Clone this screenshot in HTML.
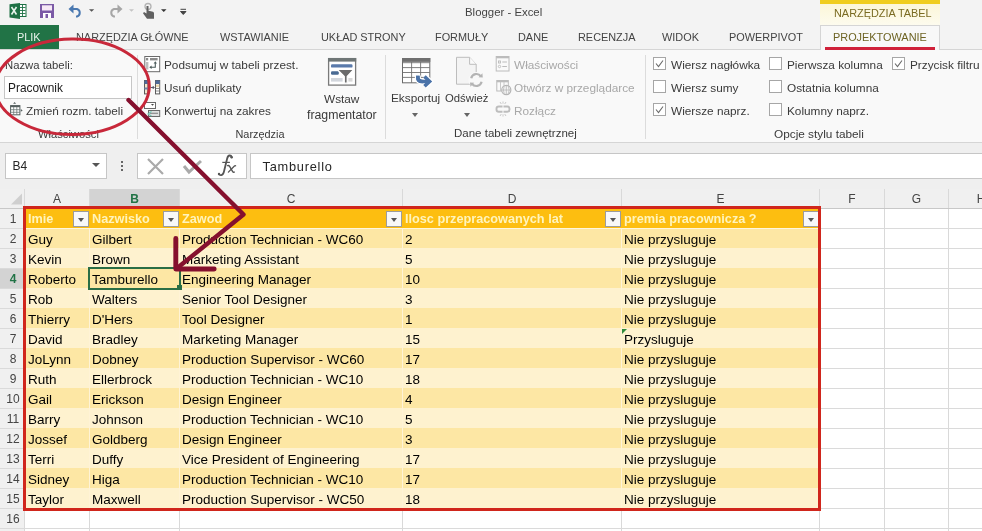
<!DOCTYPE html>
<html><head><meta charset="utf-8">
<style>
*{margin:0;padding:0;box-sizing:border-box}
html,body{width:982px;height:531px;overflow:hidden;background:#fff;will-change:transform;font-family:"Liberation Sans",sans-serif;color:#262626}
.a{position:absolute;white-space:nowrap}
#title{left:0;top:0;width:982px;height:25px;background:#f3f3f3}
#tabs{left:0;top:25px;width:982px;height:24px;background:#f3f3f3}
.tab{font-size:10.9px;color:#444;top:31px}
#ribbon{left:0;top:49px;width:982px;height:94px;background:#f9f9f9;border-top:1px solid #d5d5d5;border-bottom:1px solid #d5d5d5}
.rt{font-size:11.8px;color:#3a3a3a}
.gl{font-size:11.8px;color:#3a3a3a}
.sep{width:1px;background:#dcdcdc;top:55px;height:84px}
.dis{color:#a8a8a8}
.cb{width:13px;height:13px;border:1px solid #a6a6a6;background:#fff}
#gap1{left:0;top:143px;width:982px;height:10px;background:#efefef}
#fbar{left:0;top:153px;width:982px;height:26px;background:#efefef}
#gap2{left:0;top:179px;width:982px;height:10px;background:#efefef}
#grid{left:0;top:189px;width:982px;height:342px;background:#fff}
.ch{font-size:12px;color:#444;top:189px;height:19px;line-height:20px;text-align:center}
.rh{font-size:12px;color:#444;left:1px;width:24px;height:20px;line-height:22px;text-align:right;padding-right:3px}
.cell{font-size:13.5px;color:#000;height:20px;line-height:20px}
.hd{font-weight:bold;font-size:12.7px;color:#fff4bc}
.dd{width:16px;height:16px;background:#f8f8f8;border:1px solid #9c9c9c}
.dd:after{content:"";position:absolute;left:3.5px;top:5.5px;border-left:3.5px solid transparent;border-right:3.5px solid transparent;border-top:4px solid #555}
</style></head><body>
<div class="a" id="title"></div>
<div class="a" id="tabs"></div>
<div class="a" id="ribbon"></div>
<div class="a" id="gap1"></div>
<div class="a" id="fbar"></div>
<div class="a" id="gap2"></div>
<div class="a" id="grid"></div>

<!-- title -->
<div class="a" style="left:465px;top:6px;font-size:11.4px;color:#444">Blogger - Excel</div>
<!-- contextual tab header -->
<div class="a" style="left:820px;top:0;width:120px;height:25px;background:linear-gradient(#fcf6d4,#fdfbee)"></div>
<div class="a" style="left:820px;top:0;width:120px;height:3.5px;background:#f0cd1e"></div>
<div class="a" style="left:834px;top:7px;font-size:10.9px;color:#7a6b22">NARZĘDZIA TABEL</div>

<!-- tabs -->
<div class="a" style="left:0;top:25px;width:59px;height:24px;background:#217346"></div>
<div class="a tab" style="left:17px;color:#e6f2ea">PLIK</div>
<div class="a tab" style="left:76px">NARZĘDZIA GŁÓWNE</div>
<div class="a tab" style="left:220px">WSTAWIANIE</div>
<div class="a tab" style="left:321px">UKŁAD STRONY</div>
<div class="a tab" style="left:435px">FORMUŁY</div>
<div class="a tab" style="left:518px">DANE</div>
<div class="a tab" style="left:578px">RECENZJA</div>
<div class="a tab" style="left:662px">WIDOK</div>
<div class="a tab" style="left:729px">POWERPIVOT</div>
<div class="a" style="left:820px;top:25px;width:120px;height:25px;background:#f8f8f8;border:1px solid #d5d5d5;border-bottom:none"></div>
<div class="a tab" style="left:833px;color:#6e6424">PROJEKTOWANIE</div>
<div class="a" style="left:825px;top:47px;width:110px;height:2.5px;background:#d0213a"></div>


<!-- quick access -->
<svg class="a" style="left:0;top:0" width="200" height="25" viewBox="0 0 200 25">
 <rect x="19" y="4.5" width="7" height="12" fill="#fff" stroke="#1e7145" stroke-width="1"/>
 <path d="M19.5 7.5h6M19.5 10.5h6M19.5 13.5h6M22.5 5v11" stroke="#1e7145" stroke-width="0.9"/>
 <path d="M9.5 4.2 L20 3 V19 L9.5 17.6z" fill="#1e7145"/>
 <path d="M11.5 7 l5 7.5 M16.5 7 l-5 7.5" stroke="#e8f4ec" stroke-width="1.6"/>
 <rect x="40" y="4" width="14" height="14" fill="#7b5aa6"/>
 <rect x="42" y="5.3" width="10" height="5.2" fill="#f6e8f6"/>
 <rect x="43" y="13" width="8" height="5" fill="#fff"/>
 <rect x="45.5" y="14" width="2.5" height="4" fill="#7b5aa6"/>
 <path d="M72.5 9 H77 a4 4 0 0 1 0 7.6 H76" fill="none" stroke="#4a78b0" stroke-width="2"/>
 <path d="M68.5 9 l5 -4.5 v9z" fill="#4a78b0"/>
 <path d="M89 9.2h5.2l-2.6 2.6z" fill="#555"/>
 <path d="M118.5 9 H114 a4 4 0 0 0 0 7.6 H115" fill="none" stroke="#a6a6a6" stroke-width="2"/>
 <path d="M122.5 9 l-5 -4.5 v9z" fill="#a6a6a6"/>
 <path d="M129 9.2h5l-2.5 2.6z" fill="#c4c4c4"/>
 <circle cx="148" cy="6.5" r="3" fill="none" stroke="#b4b4b4" stroke-width="1.3"/>
 <path d="M146.5 6 v7.5 l-2.5 -1.5 l-1 1.2 l4 5.5 h7 v-5.5 q0 -1.5 -2 -1.8 l-3.5 -0.6 v-4.8z" fill="#606060"/>
 <path d="M161 9.2h5.5l-2.75 2.8z" fill="#333"/>
 <path d="M180.5 9.3h5.5M180.5 11.5h5.5l-2.75 3z" stroke="#444" fill="#444" stroke-width="1"/>
</svg>

<!-- group 1 -->
<div class="a rt" style="left:5px;top:59px;font-size:11.3px">Nazwa tabeli:</div>
<div class="a" style="left:4px;top:76px;width:128px;height:23px;background:#fff;border:1px solid #c6c6c6"></div>
<div class="a" style="left:8px;top:81px;font-size:11.9px;color:#1a1a1a">Pracownik</div>
<svg class="a" style="left:5px;top:100px" width="20" height="20" viewBox="0 0 20 20">
 <rect x="5.6" y="5.6" width="9.3" height="9.2" fill="#fff" stroke="#56605f" stroke-width="1"/>
 <rect x="5.6" y="5.6" width="9.3" height="1.6" fill="#56605f"/>
 <path d="M5.6 9.7h9.3M5.6 12.3h9.3M8.7 7v7.8M11.8 7v7.8" stroke="#6c7877" stroke-width="0.8"/>
 <path d="M8.1 3.8 L9.6 2 L11.1 3.8z" fill="#56605f"/>
 <path d="M15.8 9 L17.7 10.4 L15.8 11.8z" fill="#56605f"/>
</svg>
<div class="a rt" style="left:26px;top:104px">Zmień rozm. tabeli</div>
<div class="a gl" style="left:38px;top:128px;font-size:11.2px">Właściwości</div>
<div class="a sep" style="left:137px"></div>

<!-- group 2 -->
<svg class="a" style="left:142px;top:54px" width="20" height="66" viewBox="0 0 20 66">
 <rect x="2.8" y="2.5" width="14.9" height="15.2" fill="#fff" stroke="#6a6a6a" stroke-width="1"/>
 <rect x="4" y="4" width="2.2" height="2.4" fill="#8a8a8a"/>
 <rect x="8" y="4" width="7.6" height="2.4" fill="#8a8a8a"/>
 <rect x="4" y="8" width="2.4" height="7.5" fill="#bdbdbd"/>
 <path d="M13.3 9 V13.2 H9" fill="none" stroke="#4a5a5a" stroke-width="1.1"/>
 <path d="M11.6 9.6 L13.3 7.3 L15 9.6z M9.6 11.5 L7.3 13.2 L9.6 14.9z" fill="#4a5a5a"/>
 <rect x="2.5" y="26.5" width="3.4" height="13.4" fill="#f1e4cc" stroke="#5b5b5b" stroke-width="1"/>
 <rect x="2.5" y="26.5" width="3.4" height="3.5" fill="#4e6a9a"/>
 <rect x="2.5" y="33.5" width="3.4" height="2" fill="#6e86ab"/>
 <rect x="13.5" y="26.5" width="4.2" height="13.4" fill="#fff" stroke="#5b5b5b" stroke-width="1"/>
 <rect x="13.5" y="26.5" width="4.2" height="3.5" fill="#4e6a9a"/>
 <rect x="14" y="30.5" width="3.2" height="2.6" fill="#e8d6b0"/>
 <path d="M14 34.5 h3.2 M14 37 h3.2" stroke="#5b5b5b" stroke-width="0.7"/>
 <path d="M8.5 33.5 h3.5 M10.7 32 l1.5 1.5 l-1.5 1.5" stroke="#556" stroke-width="1" fill="none"/>
 <rect x="2.5" y="48.5" width="11" height="6" fill="#fff" stroke="#6a6a6a" stroke-width="1"/>
 <path d="M9 50 h3 l-1.5 1.8z" fill="#444"/>
 <rect x="6.5" y="56.5" width="11.2" height="6" fill="#e0e0e0" stroke="#6a6a6a" stroke-width="1"/>
 <path d="M8 59.3 h8" stroke="#8c8c8c" stroke-width="1.2"/>
 <path d="M9.5 57.5 l-3.5 2.5 l3.5 2" stroke="#6fc3b0" stroke-width="1.1" fill="none"/>
</svg>
<div class="a rt" style="left:164px;top:58px">Podsumuj w tabeli przest.</div>
<div class="a rt" style="left:164px;top:81px">Usuń duplikaty</div>
<div class="a rt" style="left:164px;top:104px">Konwertuj na zakres</div>
<svg class="a" style="left:324px;top:54px" width="36" height="36" viewBox="0 0 36 36">
 <rect x="4.6" y="4.6" width="27" height="26.5" fill="#fff" stroke="#7a7a7a" stroke-width="1.3"/>
 <rect x="4" y="4" width="28.2" height="3.6" fill="#6f7676"/>
 <rect x="7" y="10.2" width="21.5" height="3.4" rx="1.2" fill="#5a7aab"/>
 <rect x="7" y="17.3" width="7.8" height="3.4" rx="1.2" fill="#4a6b94"/>
 <rect x="7" y="24" width="11.6" height="3.6" fill="#d2d6dc"/>
 <rect x="24.4" y="24" width="4.1" height="3.6" fill="#d8d8d8"/>
 <path d="M13.2 15.3 H29.8 L23.2 22.5 V29.2 H20.3 V22.5z" fill="#6b6b6b" stroke="#fff" stroke-width="1.2" stroke-linejoin="round"/>
</svg>
<div class="a rt" style="left:324px;top:92px">Wstaw</div>
<div class="a rt" style="left:307px;top:108px;font-size:12.3px">fragmentator</div>
<div class="a gl" style="left:235.5px;top:127.5px;font-size:10.9px">Narzędzia</div>
<div class="a sep" style="left:385px"></div>

<!-- group 3 -->
<svg class="a" style="left:398px;top:54px" width="40" height="40" viewBox="0 0 40 40">
 <rect x="4.5" y="4.5" width="27.3" height="24.3" fill="#fff" stroke="#6a6a6a" stroke-width="1"/>
 <rect x="4" y="4" width="28.3" height="3.9" fill="#707070"/>
 <path d="M4.5 8.7h27.3M4.5 13.6h27.3M4.5 18.5h27.3M4.5 23.4h27.3M13.6 8v20.8M22.6 8v20.8" stroke="#707070" stroke-width="0.9"/>
 <path d="M19.8 21.5 v1.5 q0 4.5 4.5 4.5 h3" fill="none" stroke="#fff" stroke-width="6"/>
 <path d="M19.8 21.8 v1.2 q0 4.5 4.5 4.5 h3" fill="none" stroke="#4a72a8" stroke-width="3.6"/>
 <path d="M26.5 22.5 L31.6 27.4 L26.5 32.3" fill="none" stroke="#fff" stroke-width="6"/><path d="M19.8 21.8 v1.2 q0 4.5 4.5 4.5 h5" fill="none" stroke="#4a72a8" stroke-width="3.6"/><path d="M26.5 22.5 L31.6 27.4 L26.5 32.3" fill="none" stroke="#4a72a8" stroke-width="3.6"/>
</svg>
<div class="a rt" style="left:391px;top:91px">Eksportuj</div>
<div class="a" style="left:412px;top:113px;width:0;height:0;border-left:3.5px solid transparent;border-right:3.5px solid transparent;border-top:4px solid #666"></div>
<svg class="a" style="left:450px;top:52px" width="40" height="40" viewBox="0 0 40 40">
 <path d="M6.5 5.3 H19.6 L26.2 12.3 V32.2 H6.5z" fill="#f4f4f4" stroke="#bdbdbd" stroke-width="1"/>
 <path d="M19.6 5.3 V12.3 H26.2" fill="#fafafa" stroke="#bdbdbd" stroke-width="1"/>
 <circle cx="26.4" cy="28" r="8" fill="#f8f8f8"/>
 <path d="M21.2 26.2 A5.4 5.4 0 0 1 30.8 24.2" fill="none" stroke="#b4b4b4" stroke-width="2.2"/>
 <path d="M31.6 29.8 A5.4 5.4 0 0 1 22 31.8" fill="none" stroke="#b4b4b4" stroke-width="2.2"/>
 <path d="M28.6 25.2 L32.8 25.6 L32.4 21.2z" fill="#b4b4b4"/>
 <path d="M24.2 30.8 L20 30.4 L20.4 34.8z" fill="#b4b4b4"/>
</svg>
<div class="a rt" style="left:445px;top:91.5px;font-size:11.3px">Odśwież</div>
<div class="a" style="left:464px;top:113px;width:0;height:0;border-left:3.5px solid transparent;border-right:3.5px solid transparent;border-top:4px solid #666"></div>
<svg class="a" style="left:492px;top:54px" width="22" height="66" viewBox="0 0 22 66">
 <rect x="4.2" y="2.5" width="12.8" height="14.5" fill="#fafafa" stroke="#bcbcbc" stroke-width="1"/>
 <rect x="4.2" y="2.5" width="12.8" height="1.8" fill="#bcbcbc"/>
 <rect x="6.5" y="7" width="2" height="2" fill="none" stroke="#bcbcbc" stroke-width="0.9"/>
 <circle cx="7.5" cy="12.5" r="1.2" fill="none" stroke="#bcbcbc" stroke-width="0.9"/>
 <path d="M10.3 8h4.6M10.3 12.5h4.6" stroke="#bcbcbc" stroke-width="1.1"/>
 <rect x="4.8" y="26.5" width="11.5" height="10.5" fill="#fafafa" stroke="#bcbcbc" stroke-width="1"/>
 <rect x="4.8" y="26.5" width="11.5" height="1.8" fill="#bcbcbc"/>
 <path d="M8.5 28v9M12 28v9" stroke="#c4c4c4" stroke-width="0.9"/>
 <circle cx="14.3" cy="36" r="4.6" fill="#f6f6f6" stroke="#b4b4b4" stroke-width="1.1"/>
 <path d="M10 36h8.6M14.3 31.5v9M12.2 32.2q-1.5 3.8 0 7.6M16.4 32.2q1.5 3.8 0 7.6" stroke="#b8b8b8" stroke-width="0.8" fill="none"/>
 <path d="M10.5 52.5 H6.8 q-2.3 0 -2.3 2.3 v0.6 q0 2.3 2.3 2.3 H10.5" fill="none" stroke="#bdbdbd" stroke-width="1.9"/>
 <path d="M11.5 52.5 H15.2 q2.3 0 2.3 2.3 v0.6 q0 2.3 -2.3 2.3 H11.5" fill="none" stroke="#bdbdbd" stroke-width="1.9"/>
 <path d="M8 48l1.3 2M11 47.5v2.2M14 48l-1.3 2M8 62l1.3 -2M11 62.5v-2.2M14 62l-1.3 -2" stroke="#c4c4c4" stroke-width="0.9"/>
</svg>
<div class="a rt dis" style="left:514px;top:58px">Właściwości</div>
<div class="a rt dis" style="left:514px;top:81px">Otwórz w przeglądarce</div>
<div class="a rt dis" style="left:514px;top:104px">Rozłącz</div>
<div class="a gl" style="left:454px;top:127px;font-size:11.5px">Dane tabeli zewnętrznej</div>
<div class="a sep" style="left:645px"></div>

<!-- group 4 -->
<div class="a cb" style="left:653px;top:57px"></div>
<div class="a cb" style="left:653px;top:80px"></div>
<div class="a cb" style="left:653px;top:103px"></div>
<div class="a cb" style="left:769px;top:57px"></div>
<div class="a cb" style="left:769px;top:80px"></div>
<div class="a cb" style="left:769px;top:103px"></div>
<div class="a cb" style="left:892px;top:57px"></div>
<svg class="a" style="left:653px;top:57px" width="13" height="13"><path d="M3 6.5 l2.5 3 l4.5 -6" stroke="#6a6a6a" stroke-width="1.1" fill="none"/></svg>
<svg class="a" style="left:653px;top:103px" width="13" height="13"><path d="M3 6.5 l2.5 3 l4.5 -6" stroke="#6a6a6a" stroke-width="1.1" fill="none"/></svg>
<svg class="a" style="left:892px;top:57px" width="13" height="13"><path d="M3 6.5 l2.5 3 l4.5 -6" stroke="#6a6a6a" stroke-width="1.1" fill="none"/></svg>
<div class="a rt" style="left:671px;top:58px">Wiersz nagłówka</div>
<div class="a rt" style="left:671px;top:80.7px">Wiersz sumy</div>
<div class="a rt" style="left:671px;top:104px">Wiersze naprz.</div>
<div class="a rt" style="left:787px;top:58px">Pierwsza kolumna</div>
<div class="a rt" style="left:787px;top:80.7px">Ostatnia kolumna</div>
<div class="a rt" style="left:787px;top:104px">Kolumny naprz.</div>
<div class="a rt" style="left:910px;top:58px">Przycisk filtru</div>
<div class="a gl" style="left:774px;top:127px">Opcje stylu tabeli</div>

<!-- formula bar -->
<div class="a" style="left:5px;top:153px;width:102px;height:26px;background:#fff;border:1px solid #c6c6c6"></div>
<div class="a" style="left:12.5px;top:159px;font-size:12px;color:#262626">B4</div>
<div class="a" style="left:92px;top:163px;width:0;height:0;border-left:4px solid transparent;border-right:4px solid transparent;border-top:4px solid #555"></div>
<div class="a" style="left:121px;top:161px;width:2px;height:2px;background:#666"></div>
<div class="a" style="left:121px;top:165px;width:2px;height:2px;background:#666"></div>
<div class="a" style="left:121px;top:169px;width:2px;height:2px;background:#666"></div>
<div class="a" style="left:137px;top:153px;width:110px;height:26px;background:#fff;border:1px solid #c6c6c6"></div>
<svg class="a" style="left:147px;top:158px" width="95" height="18" viewBox="0 0 95 18">
 <path d="M1 1l15 15M16 1l-15 15" stroke="#aaa" stroke-width="2.2"/>
 <path d="M37 8l5 6l12 -11" stroke="#aaa" stroke-width="3" fill="none"/>
 </svg>
<svg class="a" style="left:212px;top:152px" width="30" height="28" viewBox="0 0 30 28">
 <path d="M19.8 5.3 q-0.6 -2 -2.2 -1.8 q-1.8 0.2 -2.5 3.2 l-2.8 11.5 q-0.9 4.5 -3 4.9 q-1.6 0.3 -2.4 -1" fill="none" stroke="#555" stroke-width="1.8" stroke-linecap="round"/>
 <circle cx="19.6" cy="5.3" r="1.2" fill="#555"/>
 <circle cx="7" cy="22" r="1.2" fill="#555"/>
 <path d="M10.3 10.4 h7.6" stroke="#555" stroke-width="1.2"/>
 <path d="M15.6 13.6 q1.2 -0.6 2 0.8 l3.2 5.4 q0.6 0.8 1.4 0.3" fill="none" stroke="#555" stroke-width="1.4" stroke-linecap="round"/>
 <path d="M23.6 13.8 q-0.6 -0.4 -1.4 0.4 l-5.8 5.9" fill="none" stroke="#555" stroke-width="1.3" stroke-linecap="round"/>
</svg>
<div class="a" style="left:250px;top:153px;width:740px;height:26px;background:#fff;border:1px solid #c6c6c6"></div>
<div class="a" style="left:262.5px;top:159px;font-size:12.8px;letter-spacing:0.75px;color:#262626">Tamburello</div>

<!-- grid -->
<div class="a" style="left:0;top:189px;width:982px;height:19px;background:#f0f0f0"></div>
<div class="a" style="left:89px;top:189px;width:91px;height:19px;background:#d3d3d3"></div>
<div class="a" style="left:0;top:208px;width:24px;height:323px;background:#f0f0f0"></div>
<div class="a" style="left:0;top:268px;width:24px;height:20px;background:#d3d3d3"></div>
<svg class="a" style="left:0;top:189px" width="24" height="19"><path d="M11 15.5 L22 15.5 L22 4.5z" fill="#cfcfcf"/></svg>
<div class="a" style="left:24px;top:189px;width:1px;height:342px;background:#d9d9d9"></div>
<div class="a" style="left:89px;top:189px;width:1px;height:342px;background:#d9d9d9"></div>
<div class="a" style="left:179px;top:189px;width:1px;height:342px;background:#d9d9d9"></div>
<div class="a" style="left:402px;top:189px;width:1px;height:342px;background:#d9d9d9"></div>
<div class="a" style="left:621px;top:189px;width:1px;height:342px;background:#d9d9d9"></div>
<div class="a" style="left:819px;top:189px;width:1px;height:342px;background:#d9d9d9"></div>
<div class="a" style="left:884px;top:189px;width:1px;height:342px;background:#d9d9d9"></div>
<div class="a" style="left:948px;top:189px;width:1px;height:342px;background:#d9d9d9"></div>
<div class="a" style="left:0;top:208px;width:982px;height:1px;background:#c8c8c8"></div>
<div class="a" style="left:0;top:228px;width:982px;height:1px;background:#dadada"></div>
<div class="a" style="left:0;top:248px;width:982px;height:1px;background:#dadada"></div>
<div class="a" style="left:0;top:268px;width:982px;height:1px;background:#dadada"></div>
<div class="a" style="left:0;top:288px;width:982px;height:1px;background:#dadada"></div>
<div class="a" style="left:0;top:308px;width:982px;height:1px;background:#dadada"></div>
<div class="a" style="left:0;top:328px;width:982px;height:1px;background:#dadada"></div>
<div class="a" style="left:0;top:348px;width:982px;height:1px;background:#dadada"></div>
<div class="a" style="left:0;top:368px;width:982px;height:1px;background:#dadada"></div>
<div class="a" style="left:0;top:388px;width:982px;height:1px;background:#dadada"></div>
<div class="a" style="left:0;top:408px;width:982px;height:1px;background:#dadada"></div>
<div class="a" style="left:0;top:428px;width:982px;height:1px;background:#dadada"></div>
<div class="a" style="left:0;top:448px;width:982px;height:1px;background:#dadada"></div>
<div class="a" style="left:0;top:468px;width:982px;height:1px;background:#dadada"></div>
<div class="a" style="left:0;top:488px;width:982px;height:1px;background:#dadada"></div>
<div class="a" style="left:0;top:508px;width:982px;height:1px;background:#dadada"></div>
<div class="a" style="left:0;top:528px;width:982px;height:1px;background:#dadada"></div>
<div class="a" style="left:0;top:548px;width:982px;height:1px;background:#dadada"></div>
<div class="a ch" style="left:25px;width:64px;">A</div>
<div class="a ch" style="left:90px;width:89px;color:#217346;font-weight:bold">B</div>
<div class="a ch" style="left:180px;width:222px;">C</div>
<div class="a ch" style="left:403px;width:218px;">D</div>
<div class="a ch" style="left:622px;width:197px;">E</div>
<div class="a ch" style="left:820px;width:64px;">F</div>
<div class="a ch" style="left:885px;width:63px;">G</div>
<div class="a ch" style="left:949px;width:64px;">H</div>
<div class="a rh" style="top:208px;text-align:center;padding:0;">1</div>
<div class="a rh" style="top:228px;text-align:center;padding:0;">2</div>
<div class="a rh" style="top:248px;text-align:center;padding:0;">3</div>
<div class="a rh" style="top:268px;text-align:center;padding:0;color:#217346;font-weight:bold">4</div>
<div class="a rh" style="top:288px;text-align:center;padding:0;">5</div>
<div class="a rh" style="top:308px;text-align:center;padding:0;">6</div>
<div class="a rh" style="top:328px;text-align:center;padding:0;">7</div>
<div class="a rh" style="top:348px;text-align:center;padding:0;">8</div>
<div class="a rh" style="top:368px;text-align:center;padding:0;">9</div>
<div class="a rh" style="top:388px;text-align:center;padding:0;">10</div>
<div class="a rh" style="top:408px;text-align:center;padding:0;">11</div>
<div class="a rh" style="top:428px;text-align:center;padding:0;">12</div>
<div class="a rh" style="top:448px;text-align:center;padding:0;">13</div>
<div class="a rh" style="top:468px;text-align:center;padding:0;">14</div>
<div class="a rh" style="top:488px;text-align:center;padding:0;">15</div>
<div class="a rh" style="top:508px;text-align:center;padding:0;">16</div>
<div class="a rh" style="top:528px;text-align:center;padding:0;">17</div>
<div class="a" style="left:25px;top:208px;width:794px;height:20px;background:#fdbe10"></div>
<div class="a" style="left:25px;top:228px;width:794px;height:20px;background:#fde7a4"></div>
<div class="a" style="left:25px;top:248px;width:794px;height:20px;background:#fef2cf"></div>
<div class="a" style="left:25px;top:268px;width:794px;height:20px;background:#fde7a4"></div>
<div class="a" style="left:25px;top:288px;width:794px;height:20px;background:#fef2cf"></div>
<div class="a" style="left:25px;top:308px;width:794px;height:20px;background:#fde7a4"></div>
<div class="a" style="left:25px;top:328px;width:794px;height:20px;background:#fef2cf"></div>
<div class="a" style="left:25px;top:348px;width:794px;height:20px;background:#fde7a4"></div>
<div class="a" style="left:25px;top:368px;width:794px;height:20px;background:#fef2cf"></div>
<div class="a" style="left:25px;top:388px;width:794px;height:20px;background:#fde7a4"></div>
<div class="a" style="left:25px;top:408px;width:794px;height:20px;background:#fef2cf"></div>
<div class="a" style="left:25px;top:428px;width:794px;height:20px;background:#fde7a4"></div>
<div class="a" style="left:25px;top:448px;width:794px;height:20px;background:#fef2cf"></div>
<div class="a" style="left:25px;top:468px;width:794px;height:20px;background:#fde7a4"></div>
<div class="a" style="left:25px;top:488px;width:794px;height:20px;background:#fef2cf"></div>
<div class="a" style="left:25px;top:228px;width:794px;height:1px;background:#fff6dc"></div>
<div class="a" style="left:89px;top:228px;width:1px;height:280px;background:#fff3d6"></div>
<div class="a" style="left:179px;top:228px;width:1px;height:280px;background:#fff3d6"></div>
<div class="a" style="left:402px;top:228px;width:1px;height:280px;background:#fff3d6"></div>
<div class="a" style="left:621px;top:228px;width:1px;height:280px;background:#fff3d6"></div>
<div class="a cell hd" style="left:28px;top:209px">Imie</div>
<div class="a cell hd" style="left:92px;top:209px">Nazwisko</div>
<div class="a cell hd" style="left:182px;top:209px">Zawod</div>
<div class="a cell hd" style="left:405px;top:209px">Ilosc przepracowanych lat</div>
<div class="a cell hd" style="left:624px;top:209px">premia pracownicza ?</div>
<div class="a dd" style="left:73px;top:211px"></div>
<div class="a dd" style="left:163px;top:211px"></div>
<div class="a dd" style="left:386px;top:211px"></div>
<div class="a dd" style="left:605px;top:211px"></div>
<div class="a dd" style="left:803px;top:211px"></div>
<div class="a cell" style="left:28px;top:230px">Guy</div>
<div class="a cell" style="left:92px;top:230px">Gilbert</div>
<div class="a cell" style="left:182px;top:230px">Production Technician - WC60</div>
<div class="a cell" style="left:405px;top:230px">2</div>
<div class="a cell" style="left:624px;top:230px">Nie przysluguje</div>
<div class="a cell" style="left:28px;top:250px">Kevin</div>
<div class="a cell" style="left:92px;top:250px">Brown</div>
<div class="a cell" style="left:182px;top:250px">Marketing Assistant</div>
<div class="a cell" style="left:405px;top:250px">5</div>
<div class="a cell" style="left:624px;top:250px">Nie przysluguje</div>
<div class="a cell" style="left:28px;top:270px">Roberto</div>
<div class="a cell" style="left:92px;top:270px">Tamburello</div>
<div class="a cell" style="left:182px;top:270px">Engineering Manager</div>
<div class="a cell" style="left:405px;top:270px">10</div>
<div class="a cell" style="left:624px;top:270px">Nie przysluguje</div>
<div class="a cell" style="left:28px;top:290px">Rob</div>
<div class="a cell" style="left:92px;top:290px">Walters</div>
<div class="a cell" style="left:182px;top:290px">Senior Tool Designer</div>
<div class="a cell" style="left:405px;top:290px">3</div>
<div class="a cell" style="left:624px;top:290px">Nie przysluguje</div>
<div class="a cell" style="left:28px;top:310px">Thierry</div>
<div class="a cell" style="left:92px;top:310px">D'Hers</div>
<div class="a cell" style="left:182px;top:310px">Tool Designer</div>
<div class="a cell" style="left:405px;top:310px">1</div>
<div class="a cell" style="left:624px;top:310px">Nie przysluguje</div>
<div class="a cell" style="left:28px;top:330px">David</div>
<div class="a cell" style="left:92px;top:330px">Bradley</div>
<div class="a cell" style="left:182px;top:330px">Marketing Manager</div>
<div class="a cell" style="left:405px;top:330px">15</div>
<div class="a cell" style="left:624px;top:330px">Przysluguje</div>
<div class="a cell" style="left:28px;top:350px">JoLynn</div>
<div class="a cell" style="left:92px;top:350px">Dobney</div>
<div class="a cell" style="left:182px;top:350px">Production Supervisor - WC60</div>
<div class="a cell" style="left:405px;top:350px">17</div>
<div class="a cell" style="left:624px;top:350px">Nie przysluguje</div>
<div class="a cell" style="left:28px;top:370px">Ruth</div>
<div class="a cell" style="left:92px;top:370px">Ellerbrock</div>
<div class="a cell" style="left:182px;top:370px">Production Technician - WC10</div>
<div class="a cell" style="left:405px;top:370px">18</div>
<div class="a cell" style="left:624px;top:370px">Nie przysluguje</div>
<div class="a cell" style="left:28px;top:390px">Gail</div>
<div class="a cell" style="left:92px;top:390px">Erickson</div>
<div class="a cell" style="left:182px;top:390px">Design Engineer</div>
<div class="a cell" style="left:405px;top:390px">4</div>
<div class="a cell" style="left:624px;top:390px">Nie przysluguje</div>
<div class="a cell" style="left:28px;top:410px">Barry</div>
<div class="a cell" style="left:92px;top:410px">Johnson</div>
<div class="a cell" style="left:182px;top:410px">Production Technician - WC10</div>
<div class="a cell" style="left:405px;top:410px">5</div>
<div class="a cell" style="left:624px;top:410px">Nie przysluguje</div>
<div class="a cell" style="left:28px;top:430px">Jossef</div>
<div class="a cell" style="left:92px;top:430px">Goldberg</div>
<div class="a cell" style="left:182px;top:430px">Design Engineer</div>
<div class="a cell" style="left:405px;top:430px">3</div>
<div class="a cell" style="left:624px;top:430px">Nie przysluguje</div>
<div class="a cell" style="left:28px;top:450px">Terri</div>
<div class="a cell" style="left:92px;top:450px">Duffy</div>
<div class="a cell" style="left:182px;top:450px">Vice President of Engineering</div>
<div class="a cell" style="left:405px;top:450px">17</div>
<div class="a cell" style="left:624px;top:450px">Nie przysluguje</div>
<div class="a cell" style="left:28px;top:470px">Sidney</div>
<div class="a cell" style="left:92px;top:470px">Higa</div>
<div class="a cell" style="left:182px;top:470px">Production Technician - WC10</div>
<div class="a cell" style="left:405px;top:470px">17</div>
<div class="a cell" style="left:624px;top:470px">Nie przysluguje</div>
<div class="a cell" style="left:28px;top:490px">Taylor</div>
<div class="a cell" style="left:92px;top:490px">Maxwell</div>
<div class="a cell" style="left:182px;top:490px">Production Supervisor - WC50</div>
<div class="a cell" style="left:405px;top:490px">18</div>
<div class="a cell" style="left:624px;top:490px">Nie przysluguje</div>
<svg class="a" style="left:622px;top:329px" width="6" height="6"><path d="M0 0h5L0 5z" fill="#2e8b3a"/></svg>
<div class="a" style="left:88px;top:267px;width:93px;height:23px;border:2px solid #2a6e45"></div>
<div class="a" style="left:177px;top:285px;width:5px;height:5px;background:#2a6e45"></div>
<div class="a" style="left:23px;top:206px;width:798px;height:305px;border:3px solid #d0261c"></div>
<svg class="a" style="left:0;top:0" width="982" height="531">
 <ellipse cx="72.3" cy="86.8" rx="77" ry="47.7" transform="rotate(-0.58 72.3 86.8)" fill="none" stroke="#c8283a" stroke-width="3"/>
 <path d="M128.5 100 L243.5 214.5 L178.5 267" fill="none" stroke="#85102e" stroke-width="4.4" stroke-linejoin="round" stroke-linecap="round"/>
 <path d="M175.8 238.5 L175.8 269 L214.2 269" fill="none" stroke="#85102e" stroke-width="4.9" stroke-linejoin="round" stroke-linecap="round"/>
</svg>
</body></html>
